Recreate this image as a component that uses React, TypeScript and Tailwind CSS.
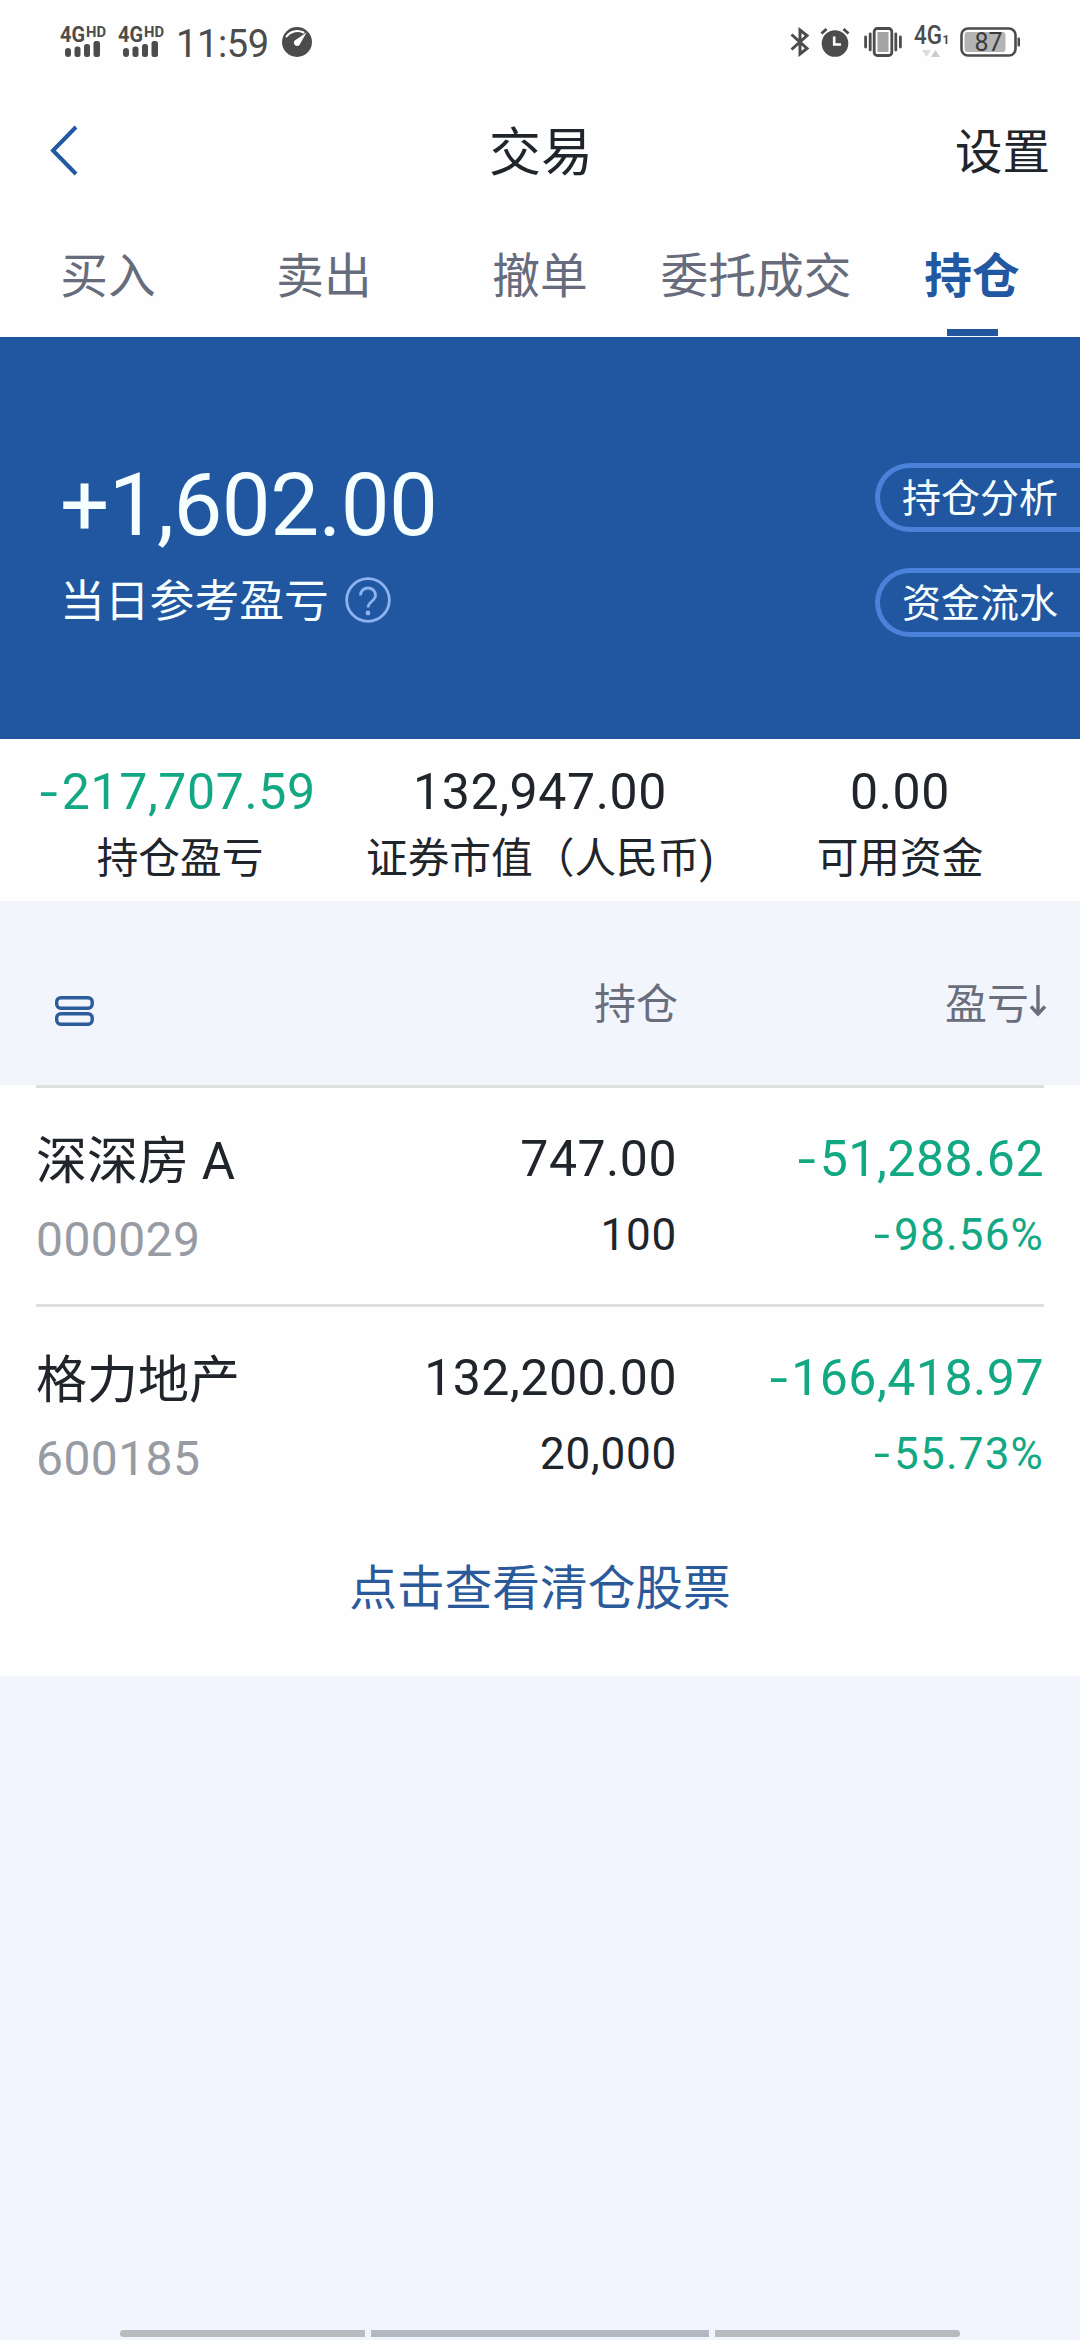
import clsx from "clsx";

const tabs = ["买入", "卖出", "撤单", "委托成交", "持仓"];
const activeTab = "持仓";

const summary = [
  { label: "持仓盈亏", value: "-217,707.59" },
  { label: "证券市值（人民币)", value: "132,947.00" },
  { label: "可用资金", value: "0.00" },
];

const holdings = [
  {
    name: "深深房 A",
    code: "000029",
    value: "747.00",
    amount: "100",
    profit: "-51,288.62",
    rate: "-98.56%",
  },
  {
    name: "格力地产",
    code: "600185",
    value: "132,200.00",
    amount: "20,000",
    profit: "-166,418.97",
    rate: "-55.73%",
  },
];

function Signal() {
  return (
    <svg
      className="overflow-visible"
      width="47"
      height="32"
      viewBox="0 0 47 32"
      fill="#4c4c4c"
    >
      <text
        x="0"
        y="16"
        fontSize="21.5"
        fontWeight="700"
        textLength="25"
        lengthAdjust="spacingAndGlyphs"
      >
        4G
      </text>
      <text
        x="26"
        y="11"
        fontSize="15"
        fontWeight="700"
        textLength="20"
        lengthAdjust="spacingAndGlyphs"
      >
        HD
      </text>
      <rect x="5" y="22" width="6" height="9" rx="3" />
      <rect x="14.5" y="20.5" width="6" height="10.5" rx="2.5" />
      <rect x="24" y="18" width="6" height="13" rx="2.5" />
      <rect x="33.5" y="15" width="6.5" height="16" rx="2.5" />
    </svg>
  );
}

function StatusBar() {
  return (
    <div className="flex h-[84px] items-center pl-[60px] pr-[59px] text-[#4c4c4c]">
      <Signal />
      <div className="ml-[11px]">
        <Signal />
      </div>
      <span className="ml-[11px] mt-1 text-[38px] leading-[44px] tracking-[-0.4px]">
        11:59
      </span>
      <svg className="ml-[13px]" width="30" height="30" viewBox="0 0 30 30">
        <circle cx="15" cy="15" r="15" fill="#4c4c4c" />
        <path
          d="M4.5 9.5C8 4.500 15 2.500 21.500 5.500"
          fill="none"
          stroke="#fff"
          strokeWidth="2"
          strokeLinecap="round"
        />
        <path d="M24.500 5.500L17.800 17.500a3.200 3.200 0 1 1-4.600-4.300z" fill="#fff" />
      </svg>

      <div className="ml-auto flex items-center">
        <svg
          width="20"
          height="30"
          viewBox="0 0 20 30"
          fill="none"
          stroke="#4c4c4c"
          strokeWidth="3"
        >
          <path d="M1.500 7.500L17 21.500L10 27V3L17 8.500L1.500 22.500" />
        </svg>
        <svg className="ml-[10px]" width="30" height="30" viewBox="0 0 30 30">
          <circle cx="15" cy="16.500" r="13.300" fill="#4c4c4c" />
          <path
            d="M1.500 6.500L6.500 2M28.500 6.500L23.500 2"
            stroke="#4c4c4c"
            strokeWidth="3"
          />
          <path
            d="M14.200 9.500V17.500H21"
            fill="none"
            stroke="#fff"
            strokeWidth="2.600"
          />
        </svg>
        <svg className="ml-[14px]" width="38" height="30" viewBox="0 0 38 30">
          <rect
            x="10.200"
            y="1.500"
            width="17.600"
            height="27"
            rx="3"
            fill="#fff"
            stroke="#4c4c4c"
            strokeWidth="2.800"
          />
          <rect x="13.500" y="5" width="11" height="20" fill="#a3a3a3" />
          <path
            d="M6.200 7v16M31.800 7v16M1.600 10v10M36.400 10v10"
            stroke="#4c4c4c"
            strokeWidth="2.800"
            strokeLinecap="round"
          />
        </svg>
        <svg
          className="ml-[12px] overflow-visible"
          width="36"
          height="34"
          viewBox="0 0 36 34"
        >
          <text
            x="0"
            y="19"
            fontSize="25"
            fontWeight="500"
            textLength="28"
            lengthAdjust="spacingAndGlyphs"
            fill="#4c4c4c"
          >
            4G
          </text>
          <text x="28.500" y="19" fontSize="12" fontWeight="700" fill="#4c4c4c">
            1
          </text>
          <path d="M8 25h9l-4.500 7z" fill="#ddd" />
          <path d="M17 32h9l-4.500-7z" fill="#ccc" />
        </svg>
        <svg className="ml-[10px]" width="61" height="30" viewBox="0 0 61 30">
          <rect
            x="1.500"
            y="1.500"
            width="54"
            height="27"
            rx="6.500"
            fill="#fff"
            stroke="#4c4c4c"
            strokeWidth="2.600"
          />
          <rect x="4.500" y="5" width="41" height="20" rx="3" fill="#b4b4b4" />
          <rect x="57.500" y="10.500" width="2.500" height="9" rx="1" fill="#4c4c4c" />
          <text
            x="28.500"
            y="24"
            fontSize="25"
            textAnchor="middle"
            fill="#3c3c3c"
          >
            87
          </text>
        </svg>
      </div>
    </div>
  );
}

function TitleBar() {
  return (
    <header className="grid h-[136px] grid-cols-3 items-center pl-[48px] pr-[30px]">
      <svg
        width="32"
        height="54"
        viewBox="0 0 32 54"
        fill="none"
        stroke="#2358a3"
        strokeWidth="4"
      >
        <path d="M28 2L5 25.500L28 49" />
      </svg>
      <h1 className="mt-1 pr-[16px] text-center text-[52px] leading-[60px]">
        交易
      </h1>
      <span className="mt-0.5 text-right text-[47.500px] leading-[60px]">
        设置
      </span>
    </header>
  );
}

function Tabs() {
  return (
    <nav className="grid h-[117px] grid-cols-5">
      {tabs.map((tab) => (
        <div
          key={tab}
          className={clsx(
            "flex flex-col items-center justify-between pt-[27px] text-[47.700px] leading-[60px]",
            tab === activeTab ? "font-bold text-[#2257a1]" : "text-[#666c7c]",
          )}
        >
          {tab}
          {tab === activeTab && (
            <span className="mb-px h-[7px] w-[51px] bg-[#23569d]" />
          )}
        </div>
      ))}
    </nav>
  );
}

function ProfitBanner() {
  return (
    <section className="flex h-[402px] justify-between bg-[#2156a1] text-[#f6ffff]">
      <div className="pl-[60px] pt-[118px]">
        <div className="text-[87px] leading-[100px] tracking-[-0.600px]">
          +1,602.00
        </div>
        <div className="mt-[17px] flex items-center">
          <span className="text-[44.800px] leading-[60px]">当日参考盈亏</span>
          <svg
            className="-mt-1 ml-[16px]"
            width="46"
            height="46"
            viewBox="0 0 46 46"
            fill="none"
            stroke="#8db3f0"
            strokeWidth="2.800"
          >
            <circle cx="23" cy="23" r="21.300" />
            <path d="M15.500 18.500c0-10 15-10 15 0c0 5.500-7.500 6-7.500 12" />
            <circle cx="23" cy="36" r="2.400" fill="#8db3f0" stroke="none" />
          </svg>
        </div>
      </div>
      <div className="flex flex-col gap-[36px] pt-[126px]">
        {["持仓分析", "资金流水"].map((text) => (
          <button
            key={text}
            className="h-[69px] w-[205px] rounded-l-full border-[5px] border-r-0 border-[#4a82da] pl-[22px] pt-0.5 text-left text-[39px] leading-[58px]"
          >
            {text}
          </button>
        ))}
      </div>
    </section>
  );
}

// losses are green, with a slightly wider minus sign
function Figure({ value }: { value: string }) {
  if (!value.startsWith("-")) return <>{value}</>;
  return (
    <span className="text-[#12a883]">
      <span className="mr-[3px] inline-block origin-right scale-x-130">-</span>
      {value.slice(1)}
    </span>
  );
}

function Summary() {
  return (
    <section className="grid h-[162px] grid-cols-3 text-center">
      {summary.map((e) => (
        <div key={e.label} className="pt-[23px] whitespace-nowrap">
          <div className="text-[50px] leading-[60px] tracking-[0.600px]">
            <Figure value={e.value} />
          </div>
          <div className="mt-[7px] text-[41.700px] leading-[60px]">
            {e.label}
          </div>
        </div>
      ))}
    </section>
  );
}

function Holdings() {
  return (
    <section>
      <div className="flex h-[184px] items-center bg-[#f2f5fc] pl-[55px] pr-[33px] text-[42px] leading-[60px] text-[#696e7a]">
        <svg
          className="mt-[36px]"
          width="39"
          height="30"
          viewBox="0 0 39 30"
          fill="none"
          stroke="#2d5c9b"
          strokeWidth="3.400"
        >
          <rect x="1.700" y="1.700" width="35.500" height="10.500" rx="4" />
          <rect x="1.700" y="17.800" width="35.500" height="10.500" rx="4" />
        </svg>
        <span className="ml-auto mt-6">持仓</span>
        <div className="mt-6 flex w-[369px] items-center justify-end">
          盈亏
          <svg
            className="mb-2"
            width="18"
            height="32"
            viewBox="0 0 18 32"
            fill="none"
            stroke="#696e7a"
            strokeWidth="3.400"
          >
            <path d="M9 0V29M2 21.500L9 29L16 21.500" />
          </svg>
        </div>
      </div>

      <ul className="px-[36px]">
        {holdings.map((e) => (
          <li
            key={e.code}
            className="grid h-[219px] grid-cols-[280px_361px_1fr] border-t-[3px] border-[#dfdfe0] pt-[38px]"
          >
            <div>
              <div className="mt-[3px] text-[51px] leading-[66px]">
                {e.name}
              </div>
              <div className="mt-[15px] text-[48px] leading-[60px] tracking-[0.400px] text-[#979ba3]">
                {e.code}
              </div>
            </div>
            <div className="text-right">
              <div className="text-[50px] leading-[66px] tracking-[0.500px]">
                {e.value}
              </div>
              <div className="mt-[13px] text-[44px] leading-[60px] tracking-[0.800px]">
                {e.amount}
              </div>
            </div>
            <div className="text-right">
              <div className="text-[50px] leading-[66px] tracking-[0.500px]">
                <Figure value={e.profit} />
              </div>
              <div className="mt-[13px] text-[44px] leading-[60px] tracking-[1.200px]">
                <Figure value={e.rate} />
              </div>
            </div>
          </li>
        ))}
      </ul>

      <div className="h-[153px] pt-[36px] text-center text-[47.700px] leading-[60px] text-[#2b5a9b]">
        点击查看清仓股票
      </div>
    </section>
  );
}

export default function App() {
  return (
    <div className="flex h-[2340px] w-[1080px] flex-col overflow-hidden bg-[#f2f5fd] font-[Roboto,'Noto_Sans_CJK_SC',sans-serif] text-[#20242b]">
      <div className="bg-[#fefefe]">
        <StatusBar />
        <TitleBar />
        <Tabs />
        <ProfitBanner />
        <Summary />
        <Holdings />
      </div>
      <div className="mt-auto mb-[3px] flex justify-center gap-[6px]">
        <span className="h-[7px] w-[245px] rounded-l-full bg-[#b9babd]" />
        <span className="h-[7px] w-[338px] bg-[#b3b9c3]" />
        <span className="h-[7px] w-[245px] rounded-r-full bg-[#b9babd]" />
      </div>
    </div>
  );
}
